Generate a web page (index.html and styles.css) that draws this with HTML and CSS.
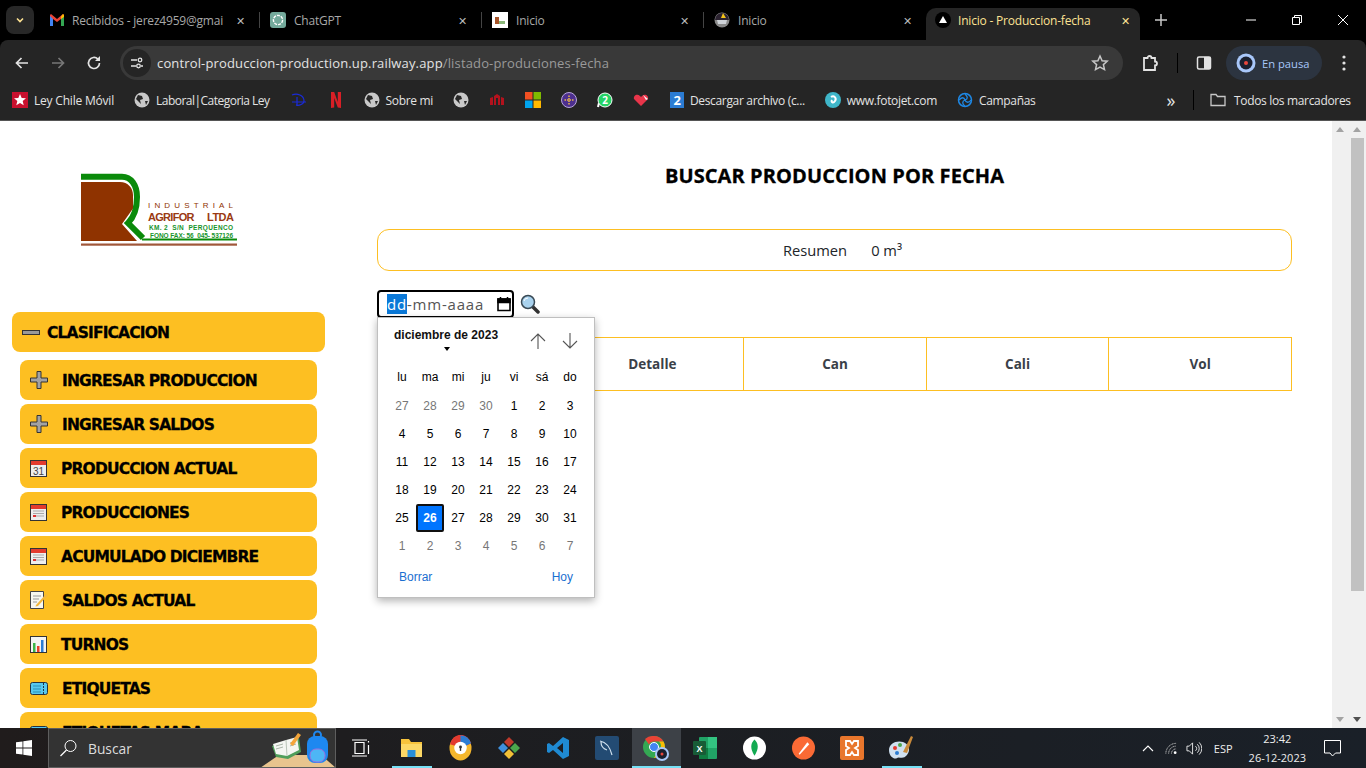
FILE: index.html
```html
<!DOCTYPE html>
<html lang="es">
<head>
<meta charset="utf-8">
<title>Inicio - Produccion-fecha</title>
<link rel="stylesheet" href="styles.css">
</head>
<body>
<div class="screen">
  <header class="tabstrip">
    <div class="tabmenu"><svg width="12" height="12" viewBox="0 0 12 12"><path d="M3 4.500l3 3 3-3" fill="none" stroke="#fde293" stroke-width="1.600"/></svg></div>
    <div class="tab t1">
      <svg class="fav" width="16" height="16" viewBox="0 0 16 16"><path d="M1 3v11h3V7l4 3 4-3v7h3V3l-1-1-6 5-6-5z" fill="#ea4335"/><path d="M1 4v10h3V7z" fill="#4285f4"/><path d="M15 4v10h-3V7z" fill="#34a853"/><path d="M12 4.500l2-2.500 1 1v2l-3 2z" fill="#fbbc04"/></svg>
      <span class="tabtext">Recibidos - jerez4959@gmai</span><span class="x">✕</span>
    </div><i class="sep"></i>
    <div class="tab t2">
      <svg class="fav" width="16" height="16" viewBox="0 0 16 16"><rect width="16" height="16" rx="3" fill="#74aa9c"/><circle cx="8" cy="8" r="4.600" fill="none" stroke="#fff" stroke-width="1.400" stroke-dasharray="3 1"/></svg>
      <span class="tabtext">ChatGPT</span><span class="x">✕</span>
    </div><i class="sep"></i>
    <div class="tab t2">
      <svg class="fav" width="16" height="16" viewBox="0 0 16 16"><rect width="16" height="16" fill="#fff"/><rect x="3" y="5" width="4" height="7" fill="#a8552a"/><rect x="7" y="9" width="6" height="3" fill="#8cb87a"/></svg>
      <span class="tabtext">Inicio</span><span class="x">✕</span>
    </div><i class="sep"></i>
    <div class="tab t3">
      <svg class="fav" width="16" height="16" viewBox="0 0 16 16"><circle cx="8" cy="8" r="7.500" fill="#8a8a8a"/><path d="M1 8a7 7 0 0 1 14 0z" fill="#2b2230"/><path d="M9 1l3 5H7z" fill="#f5c518"/><path d="M3 8h10l-1 4H4z" fill="#cfd3d8"/></svg>
      <span class="tabtext">Inicio</span><span class="x">✕</span>
    </div>
    <div class="tab active">
      <svg class="fav" width="16" height="16" viewBox="0 0 16 16"><circle cx="8" cy="8" r="8" fill="#000"/><path d="M8 4l4 7H4z" fill="#fff"/></svg>
      <span class="tabtext">Inicio - Produccion-fecha</span><span class="x">✕</span>
    </div>
    <div class="newtab"><svg width="14" height="14" viewBox="0 0 14 14"><path d="M7 1v12M1 7h12" stroke="#c7c7c7" stroke-width="1.500"/></svg></div>
    <div class="winctl">
      <svg width="12" height="12" viewBox="0 0 12 12"><path d="M1 6h10" stroke="#fff"/></svg>
      <svg width="12" height="12" viewBox="0 0 12 12"><path d="M1.500 3.500h7v7h-7zM3.500 3.500v-2h7v7h-2" fill="none" stroke="#fff"/></svg>
      <svg width="12" height="12" viewBox="0 0 12 12"><path d="M1 1l10 10M11 1L1 11" stroke="#fff"/></svg>
    </div>
  </header>

  <nav class="toolbar">
    <svg class="tb" width="16" height="16" viewBox="0 0 16 16"><path d="M14 8H2.500M7.500 3l-5 5 5 5" fill="none" stroke="#e3e3e3" stroke-width="1.700"/></svg>
    <svg class="tb" width="16" height="16" viewBox="0 0 16 16"><path d="M2 8h11.500M8.500 3l5 5-5 5" fill="none" stroke="#777" stroke-width="1.700"/></svg>
    <svg class="tb" width="16" height="16" viewBox="0 0 16 16"><path d="M13.500 8a5.500 5.500 0 1 1-1.600-3.900" fill="none" stroke="#e3e3e3" stroke-width="1.700"/><path d="M14 1v5H9z" fill="#e3e3e3"/></svg>
    <div class="omnibox">
      <span class="site"><svg width="14" height="14" viewBox="0 0 14 14"><path d="M1 4h6M11 10h2M1 10h5" stroke="#e3e3e3" stroke-width="1.300"/><circle cx="10" cy="4" r="1.800" fill="none" stroke="#e3e3e3" stroke-width="1.300"/><circle cx="8.500" cy="10" r="1.800" fill="none" stroke="#e3e3e3" stroke-width="1.300"/></svg></span>
      <span class="url">control-produccion-production.up.railway.app<span class="urlpath">/listado-produciones-fecha</span></span>
      <svg class="star" width="18" height="18" viewBox="0 0 18 18"><path d="M9 2l2.100 4.700 5.100.5-3.800 3.400 1.100 5L9 13l-4.500 2.600 1.100-5L1.800 7.200l5.100-.5z" fill="none" stroke="#c7c7c7" stroke-width="1.500"/></svg>
    </div>
    <svg class="ext" width="18" height="18" viewBox="0 0 18 18"><path d="M3 4h3.500a2 2 0 0 1 4 0H14v3.500a2 2 0 0 1 0 4V16H3z" fill="none" stroke="#e3e3e3" stroke-width="1.800"/></svg>
    <i class="tbsep"></i>
    <svg class="side" width="16" height="16" viewBox="0 0 16 16"><rect x="1.500" y="2" width="13" height="12" rx="1.500" fill="none" stroke="#e3e3e3" stroke-width="1.500"/><rect x="8" y="2" width="6.500" height="12" fill="#e3e3e3"/></svg>
    <div class="profile">
      <svg width="20" height="20" viewBox="0 0 20 20"><circle cx="10" cy="10" r="9.500" fill="#a8c7fa"/><circle cx="10" cy="10" r="6.500" fill="#1a2030"/><circle cx="10" cy="10" r="2" fill="#e8453c"/></svg>
      <span>En pausa</span>
    </div>
    <svg class="dots" width="4" height="16" viewBox="0 0 4 16"><circle cx="2" cy="2" r="1.600" fill="#e3e3e3"/><circle cx="2" cy="8" r="1.600" fill="#e3e3e3"/><circle cx="2" cy="14" r="1.600" fill="#e3e3e3"/></svg>
  </nav>

  <nav class="bookmarks">
    <a class="bm ley"><svg width="16" height="16" viewBox="0 0 16 16"><rect width="16" height="16" fill="#c8102e"/><path d="M8 2l1.700 4 4.300.3-3.300 2.800 1 4.200L8 11l-3.700 2.300 1-4.200L2 6.300 6.300 6z" fill="#fff"/></svg>Ley Chile Móvil</a>
    <a class="bm lab3"><svg width="16" height="16" viewBox="0 0 16 16"><circle cx="8" cy="8" r="7.500" fill="#c9c9c9"/><path d="M4 3l4 1 1 3-3 1 1 4-3-3-2-2zM11 9l3 0-2 4z" fill="#282828"/></svg>Laboral|Categoria Ley</a>
    <a class="bm dis"><svg width="16" height="16" viewBox="0 0 16 16"><path d="M1 3c5-2 12 0 12 6 0 3-5 5-8 4M6 5v9M1 10h14" fill="none" stroke="#1a2bd8" stroke-width="1.200"/></svg></a>
    <a class="bm nf"><svg width="12" height="16" viewBox="0 0 12 16"><path d="M1 0h3.200l3.600 10V0H11v16l-3.200-.5L4.200 6v9.500L1 16z" fill="#d81f26"/></svg></a>
    <a class="bm"><svg width="16" height="16" viewBox="0 0 16 16"><circle cx="8" cy="8" r="7.500" fill="#c9c9c9"/><path d="M4 3l4 1 1 3-3 1 1 4-3-3-2-2zM11 9l3 0-2 4z" fill="#282828"/></svg>Sobre mi</a>
    <a class="bm"><svg width="16" height="16" viewBox="0 0 16 16"><circle cx="8" cy="8" r="7.500" fill="#c9c9c9"/><path d="M4 3l4 1 1 3-3 1 1 4-3-3-2-2zM11 9l3 0-2 4z" fill="#282828"/></svg></a>
    <a class="bm"><svg width="16" height="16" viewBox="0 0 16 16"><path d="M1 6l3-1v8H1zM5 4l3-2 3 2v9H9V6H7v7H5zM12 5l3 1v7h-3z" fill="#b3121d"/></svg></a>
    <a class="bm"><svg width="16" height="16" viewBox="0 0 16 16"><rect width="7.500" height="7.500" fill="#f25022"/><rect x="8.500" width="7.500" height="7.500" fill="#7fba00"/><rect y="8.500" width="7.500" height="7.500" fill="#00a4ef"/><rect x="8.500" y="8.500" width="7.500" height="7.500" fill="#ffb900"/></svg></a>
    <a class="bm"><svg width="16" height="16" viewBox="0 0 16 16"><circle cx="8" cy="8" r="7.500" fill="#4d2f8e" stroke="#b9a6dc"/><path d="M3.500 8h9M8 3.500v9" stroke="#e8b84a" stroke-width="1.500" stroke-dasharray="1.500 1"/></svg></a>
    <a class="bm"><svg width="16" height="16" viewBox="0 0 16 16"><path d="M1 15l1-4" stroke="#fff" stroke-width="2"/><circle cx="8" cy="8" r="7" fill="#25d366" stroke="#fff"/><text class="wa" x="8" y="11.500">2</text></svg></a>
    <a class="bm hrt"><svg width="16" height="16" viewBox="0 0 16 16"><path d="M8 14L1 7c-1-3 3-6 6-3l1 1 1-1c3-3 7 0 6 3z" fill="#e8354a"/><path d="M10 3l5 4-2 1z" fill="#f2f2f2"/></svg></a>
    <a class="bm"><svg width="14" height="16" viewBox="0 0 14 16"><rect width="14" height="16" fill="#2b7cd3"/><text class="two" x="7" y="13">2</text></svg>Descargar archivo (c...</a>
    <a class="bm"><svg width="16" height="16" viewBox="0 0 16 16"><circle cx="8" cy="8" r="8" fill="#3fb6c9"/><path d="M6 5c3-2 6 1 4 4s-4 1-3-1" fill="none" stroke="#fff" stroke-width="2"/></svg>www.fotojet.com</a>
    <a class="bm"><svg width="16" height="16" viewBox="0 0 16 16"><circle cx="8" cy="8" r="6.500" fill="none" stroke="#1e88e5" stroke-width="1.500"/><path d="M8 2c3 3 3 5 0 6s-3 4 0 6M2 8c3-3 5-3 6 0s4 3 6 0" fill="none" stroke="#1e88e5" stroke-width="1.300"/></svg>Campañas</a>
    <span class="more">»</span>
    <i class="bmsep"></i>
    <a class="bm last"><svg width="16" height="14" viewBox="0 0 16 14"><path d="M1 12.500V1.500h5l1.500 2h7.500v9z" fill="none" stroke="#c7c7c7" stroke-width="1.300"/></svg>Todos los marcadores</a>
  </nav>

  <main class="viewport">
    <div class="page">
      <aside class="sidebar">
        <div class="logo">
          <svg width="158" height="75" viewBox="0 0 158 75">
            <path d="M1 3.700H42C51 3.700 57 12 57 24C57 36 54 44 48 50L63 65" fill="none" stroke="#0a8a0a" stroke-width="6"/>
            <path d="M62 66.500H157" stroke="#0a8a0a" stroke-width="2"/>
            <path d="M1 9H40C48 9 53 15 53 22V35.500L42 51L57 68H1z" fill="#8f3300"/>
            <rect x="1" y="70.500" width="156" height="2.200" fill="#a0573a"/>
            <text class="lg1" x="68" y="35" textLength="85">INDUSTRIAL</text>
            <text class="lg2" x="68" y="48" textLength="46.500">AGRIFOR</text>
            <text class="lg2" x="127" y="48" textLength="27">LTDA</text>
            <text class="lg3" x="69" y="57" textLength="84">KM. 2  S/N  PERQUENCO</text>
            <text class="lg3" x="70" y="65" textLength="83">FONO FAX: 56  045- 537126</text>
          </svg>
        </div>
        <div class="menuhead"><span class="minus"></span>CLASIFICACION</div>
        <ul class="menu">
          <li class="item"><span class="ic"><svg width="18" height="18" viewBox="0 0 18 18"><path class="plus" d="M7 .5h4v6.500h6.500v4H11v6.500H7V11H.5V7H7z"/></svg></span><span class="lab2">INGRESAR PRODUCCION</span></li>
          <li class="item"><span class="ic"><svg width="18" height="18" viewBox="0 0 18 18"><path class="plus" d="M7 .5h4v6.500h6.500v4H11v6.500H7V11H.5V7H7z"/></svg></span><span class="lab2">INGRESAR SALDOS</span></li>
          <li class="item"><span class="ic"><svg width="17" height="17" viewBox="0 0 17 17"><rect x=".5" y=".5" width="16" height="16" fill="#eee" stroke="#333"/><rect x="1" y="1" width="15" height="4" fill="#e33b2e"/><text class="cal31" x="8.500" y="14.500">31</text></svg></span><span>PRODUCCION ACTUAL</span></li>
          <li class="item"><span class="ic"><svg width="17" height="17" viewBox="0 0 17 17"><rect x=".5" y=".5" width="16" height="16" fill="#eee" stroke="#333"/><rect x="1" y="1" width="15" height="4" fill="#e33b2e"/><path d="M3 7h11M3 9.500h11M3 12h11" stroke="#aaa"/><rect x="3" y="11" width="3" height="2" fill="#d33"/></svg></span><span>PRODUCCIONES</span></li>
          <li class="item"><span class="ic"><svg width="17" height="17" viewBox="0 0 17 17"><rect x=".5" y=".5" width="16" height="16" fill="#eee" stroke="#333"/><rect x="1" y="1" width="15" height="4" fill="#e33b2e"/><path d="M3 7h11M3 9.500h11M3 12h11" stroke="#aaa"/><rect x="3" y="11" width="3" height="2" fill="#d33"/></svg></span><span>ACUMULADO DICIEMBRE</span></li>
          <li class="item"><span class="ic"><svg width="18" height="18" viewBox="0 0 18 18"><path d="M.5.500h13v17H.5z" fill="#f7f7f0" stroke="#444"/><path d="M3 5h8M3 8h6M3 11h4" stroke="#999"/><path d="M6 14l10-11 1.500 1.500L8 15l-2.500.5z" fill="#f3b73c"/></svg></span><span class="lab2">SALDOS ACTUAL</span></li>
          <li class="item"><span class="ic"><svg width="17" height="17" viewBox="0 0 17 17"><rect x=".5" y=".5" width="16" height="16" fill="#f4f4f4" stroke="#333"/><rect x="3" y="7" width="2.500" height="9" fill="#3bb54a"/><rect x="7" y="10" width="2.500" height="6" fill="#e8402c"/><rect x="11" y="4" width="2.500" height="12" fill="#2b7cd3"/></svg></span><span>TURNOS</span></li>
          <li class="item"><span class="ic"><svg width="18" height="13" viewBox="0 0 18 13"><rect x=".5" y=".5" width="17" height="12" rx="2" fill="#56c8ee" stroke="#234"/><path d="M3 4h8M3 7h8M3 10h8" stroke="#2a8fb5"/><path d="M13.500 1v11" stroke="#234" stroke-dasharray="2 1"/></svg></span><span class="lab2">ETIQUETAS</span></li>
          <li class="item"><span class="ic"><svg width="18" height="13" viewBox="0 0 18 13"><rect x=".5" y=".5" width="17" height="12" rx="2" fill="#56c8ee" stroke="#234"/></svg></span><span class="lab2">ETIQUETAS MARA</span></li>
        </ul>
      </aside>
      <section class="content">
        <h1 class="title">BUSCAR PRODUCCION POR FECHA</h1>
        <div class="resumen"><span>Resumen</span><span>0 m³</span></div>
        <div class="search">
          <div class="dateinput"><span class="dd">dd</span><span>-mm-aaaa</span>
            <svg width="16" height="16" viewBox="0 0 16 16"><path d="M2 3h12v11.500H2z" fill="none" stroke="#000" stroke-width="1.600"/><path d="M2 3h12v3.500H2zM4.500 1v2M11.500 1v2" fill="#000" stroke="#000" stroke-width="1.500"/></svg>
          </div>
          <svg width="20" height="20" viewBox="0 0 20 20"><path d="M12 12l6 6" stroke="#333" stroke-width="3.500" stroke-linecap="round"/><circle cx="8" cy="8" r="6.500" fill="#a9d2ee" stroke="#3a4a55" stroke-width="1.500"/><path d="M4 7a4 4 0 0 1 4-3" stroke="#fff" fill="none"/></svg>
        </div>
        <div class="tablewrap">
          <div class="tcell"></div>
          <div class="tcell">Detalle</div>
          <div class="tcell">Can</div>
          <div class="tcell">Cali</div>
          <div class="tcell">Vol</div>
        </div>
        <div class="picker">
          <div class="phead">
            <div class="month">diciembre de 2023<span class="caret"></span></div>
            <svg width="16" height="18" viewBox="0 0 16 18"><path d="M8 17V2M1 9l7-7 7 7" fill="none" stroke="#555" stroke-width="1.100"/></svg>
            <svg class="down" width="16" height="18" viewBox="0 0 16 18"><path d="M8 1v15M1 9l7 7 7-7" fill="none" stroke="#555" stroke-width="1.100"/></svg>
          </div>
          <div class="grid">
            <b>lu</b><b>ma</b><b>mi</b><b>ju</b><b>vi</b><b>sá</b><b>do</b>
            <i class="off">27</i><i class="off">28</i><i class="off">29</i><i class="off">30</i><i>1</i><i>2</i><i>3</i>
            <i>4</i><i>5</i><i>6</i><i>7</i><i>8</i><i>9</i><i>10</i>
            <i>11</i><i>12</i><i>13</i><i>14</i><i>15</i><i>16</i><i>17</i>
            <i>18</i><i>19</i><i>20</i><i>21</i><i>22</i><i>23</i><i>24</i>
            <i>25</i><i class="today">26</i><i>27</i><i>28</i><i>29</i><i>30</i><i>31</i>
            <i class="off">1</i><i class="off">2</i><i class="off">3</i><i class="off">4</i><i class="off">5</i><i class="off">6</i><i class="off">7</i>
          </div>
          <div class="pfoot"><span>Borrar</span><span>Hoy</span></div>
        </div>
      </section>
    </div>
    <div class="scrollbar">
      <span class="arrow up"></span>
      <span class="arrow dn"></span>
    </div>
    <div class="scrollbar">
      <span class="arrow up"></span>
      <span class="thumb"></span>
      <span class="arrow dn dark"></span>
    </div>
  </main>

  <footer class="taskbar">
    <div class="start"><svg width="16" height="16" viewBox="0 0 16 16"><path d="M0 2.300l6.500-.9v6.200H0zM7.300 1.300L16 0v7.600H7.300zM0 8.400h6.500v6.200L0 13.700zM7.300 8.400H16V16l-8.700-1.200z" fill="#fff"/></svg></div>
    <div class="searchbox">
      <svg width="17" height="18" viewBox="0 0 17 18"><circle cx="10.500" cy="7" r="5.500" fill="none" stroke="#fff"/><path d="M6.500 11l-6 6" stroke="#fff" stroke-width="1.200"/></svg>
      <span>Buscar</span>
      <svg class="deco" width="76" height="40" viewBox="0 0 76 40"><path d="M0 40l19-13h42l15 13z" fill="#e8c48e"/><path d="M12 18l14-5 13-3 2 14-13 7-12-2z" fill="#4f9e5a"/><path d="M13 16l13-4 11-3 2 13-12 6-11-2z" fill="#f4f6f2"/><path d="M26 12l1 16" stroke="#b9c4b9"/><path d="M16 18l7-2M16 21l7-2M30 15l6-2M30 18l6-2" stroke="#a8b4a8"/><path d="M30 16l8-11 3 2-8 11z" fill="#f4a53a"/><rect x="47" y="8" width="21" height="27" rx="8" fill="#1e88f0"/><circle cx="57.500" cy="7" r="3.500" fill="none" stroke="#1e88f0" stroke-width="2"/><rect x="50" y="21" width="15" height="13" rx="6" fill="#4db6f5" stroke="#9a6fe0"/></svg>
    </div>
    <div class="tasks">
      <span class="task first"><svg width="18" height="18" viewBox="0 0 18 18"><path d="M3 3.500h9v11H3zM0 1h15M0 17h15M16.500 2v1.500M16.500 6v9" stroke="#fff" fill="none" stroke-width="1.200"/></svg></span>
      <span class="task open"><svg width="23" height="20" viewBox="0 0 23 20"><path d="M1 1h8l2 3h11v15H1z" fill="#f7c33c"/><rect x="1" y="6" width="21" height="13" fill="#fcd866"/><rect x="7.500" y="12" width="8" height="7" fill="#2a8fd8"/></svg></span>
      <span class="task"><svg width="23" height="26" viewBox="0 0 24 26"><ellipse cx="12" cy="13" rx="11.500" ry="13" fill="#f5b72c"/><path d="M1 9a11.500 13 0 0 1 22-1l-6 3a5.500 5.500 0 0 0-10 0z" fill="#e23a30"/><path d="M12 0a11.500 13 0 0 1 11 8l-6 3-5-4z" fill="#2b7cd3"/><circle cx="12" cy="13" r="6.500" fill="#fff"/><circle cx="12" cy="12" r="1.500" fill="#333"/><rect x="11.300" y="12" width="1.400" height="4" fill="#333"/></svg></span>
      <span class="task"><svg width="24" height="24" viewBox="0 0 24 24"><path d="M12 1l5 5-5 5-5-5z" fill="#c0392b"/><path d="M6 7l5 5-5 5-5-5z" fill="#3f8fdc"/><path d="M18 7l5 5-5 5-5-5z" fill="#4ca64c"/><path d="M12 13l5 5-5 5-5-5z" fill="#f2c037"/></svg></span>
      <span class="task"><svg width="24" height="24" viewBox="0 0 24 24"><path d="M17 1l6 3v16l-6 3L7 14l-4 3-2-1V8l2-1 4 3zM17 7l-6 5 6 5z" fill="#1f8ad2"/></svg></span>
      <span class="task"><svg width="24" height="24" viewBox="0 0 24 24"><rect width="24" height="24" rx="2" fill="#234b73"/><path d="M5 5c6 1 10 6 12 14M6 6c0 4 3 7 6 8" fill="none" stroke="#cfe0ee" stroke-width="1.200"/></svg></span>
      <span class="task active open"><svg width="28" height="27" viewBox="0 0 28 27"><circle cx="12" cy="12" r="11" fill="#34a853"/><path d="M12 1a11 11 0 0 1 9.500 5.500H12a5.500 5.500 0 0 0-5 3L3 4a11 11 0 0 1 9-3z" fill="#ea4335"/><path d="M21.500 6.500A11 11 0 0 1 12 23l5-8a5.500 5.500 0 0 0 0-8.500z" fill="#fbbc04"/><circle cx="12" cy="12" r="4.500" fill="#4285f4" stroke="#fff"/><circle cx="20" cy="19" r="7" fill="#a8c7fa"/><circle cx="20" cy="19" r="5" fill="#1a2030"/><circle cx="20" cy="19" r="1.500" fill="#e8453c"/></svg></span>
      <span class="task"><svg width="24" height="24" viewBox="0 0 24 24"><rect x="6" y="1" width="18" height="22" rx="1" fill="#21a366"/><rect x="15" y="1" width="9" height="11" fill="#33c481"/><rect x="6" y="12" width="9" height="11" fill="#107c41"/><rect y="5" width="13" height="14" rx="1" fill="#185c37"/><text class="xl" x="6.500" y="16">X</text></svg></span>
      <span class="task"><svg width="23" height="24" viewBox="0 0 24 24"><circle cx="12" cy="12" r="12" fill="#fff"/><path d="M12 3c4 4 5 9 0 17-5-8-4-13 0-17z" fill="#13aa52"/></svg></span>
      <span class="task"><svg width="23" height="24" viewBox="0 0 24 24"><circle cx="12" cy="12" r="12" fill="#fa6a35"/><path d="M7 18l9-12 2 2-10 11z" fill="#fff"/></svg></span>
      <span class="task"><svg width="24" height="24" viewBox="0 0 24 24"><rect width="24" height="24" rx="2" fill="#e8762c"/><path d="M6 5h4l2 3 2-3h4v5l-3 2 3 2v5h-4l-2-3-2 3H6v-5l3-2-3-2z" fill="none" stroke="#fff" stroke-width="1.800"/></svg></span>
      <span class="task open"><svg width="26" height="26" viewBox="0 0 26 26"><path d="M1 15c0-7 8-10 14-8s8 8 4 13-8 1-10 3-8-1-8-8z" fill="#cfe0f0"/><circle cx="7" cy="13" r="2" fill="#e23a30"/><circle cx="12" cy="10" r="2" fill="#4ca64c"/><circle cx="9" cy="18" r="2" fill="#2b7cd3"/><path d="M15 17L23 1l2 1-6 16z" fill="#c98a3a"/></svg></span>
    </div>
    <div class="tray">
      <svg width="12" height="8" viewBox="0 0 12 8"><path d="M1 7l5-5 5 5" fill="none" stroke="#fff" stroke-width="1.100"/></svg>
      <svg class="wifi" width="13" height="14" viewBox="0 0 14 14"><path d="M2 13a11 11 0 0 1 11-11M5 13a8 8 0 0 1 8-8M8 13a5 5 0 0 1 5-5" fill="none" stroke="#ccc" stroke-dasharray="1.200 .6"/><circle cx="12" cy="12" r="1.500" fill="#fff"/></svg>
      <svg class="vol" width="16" height="15" viewBox="0 0 17 15"><path d="M1 5h2.500L7 1.500v12L3.500 10H1zM10 5a3 3 0 0 1 0 5M12 3a6 6 0 0 1 0 9M14 1a9 9 0 0 1 0 13" fill="none" stroke="#fff" stroke-width=".9"/></svg>
      <span class="lang">ESP</span>
      <div class="clock"><span>23:42</span><span>26-12-2023</span></div>
      <svg class="notif" width="17" height="17" viewBox="0 0 17 17"><path d="M.5.500h16v12.500h-5L8.500 16 6 13H.5z" fill="none" stroke="#fff"/></svg>
    </div>
  </footer>
</div>
</body>
</html>
```
FILE: styles.css
```css
* { box-sizing: border-box; }
html, body { margin: 0; height: 100%; overflow: hidden; }
body { font-family: "Open Sans", "Noto Sans", sans-serif; }
.screen { width: 1366px; height: 768px; display: flex; flex-direction: column; overflow: hidden; background: #000; }

.tabstrip { height: 40px; background: #000; display: flex; align-items: flex-end; padding-left: 6px; flex: none; }
.tabmenu { width: 28px; height: 28px; margin: 0 7px 6px 0; border-radius: 8px; background: #282828; display: flex; align-items: center; justify-content: center; flex: none; }
.tab { height: 32px; padding-bottom: 8px; display: flex; align-items: center; color: #a8a8a8; font-size: 12px; letter-spacing: -.2px; flex: none; }
.tab .fav { flex: none; margin-right: 8px; }
.tabtext { flex: 1; white-space: nowrap; overflow: hidden; }
.x { font-size: 11px; color: #bbb; width: 16px; text-align: center; flex: none; }
.t1 { width: 218px; padding-left: 8px; padding-right: 11px; }
.t1 .fav { margin-right: 7px; }
.t2 { width: 221px; padding-left: 10px; padding-right: 11px; }
.t3 { width: 222px; padding-left: 10px; padding-right: 11px; }
.sep { width: 1px; height: 16px; background: #444; margin: 0 0 12px; flex: none; }
.tab.active { width: 214px; background: #252525; border-radius: 10px 10px 0 0; color: #fde293; padding-left: 9px; padding-right: 7px; }
.tab.active .x { color: #fde293; }
.tab.active .fav { margin-right: 7px; }
.newtab { width: 30px; height: 32px; padding-bottom: 8px; display: flex; align-items: center; justify-content: center; margin-left: 6px; flex: none; }
.winctl { margin-left: auto; height: 40px; width: 138px; display: flex; align-items: center; justify-content: space-between; padding: 0 17px; align-self: flex-start; flex: none; }

.toolbar { height: 46px; background: #252525; border-radius: 8px 8px 0 0; display: flex; align-items: center; flex: none; padding: 6px 0 6px 14px; }
.tb { margin-right: 20px; flex: none; }
.tb:nth-of-type(3) { margin-right: 18px; }
.omnibox { width: 1003px; height: 34px; background: #393939; border-radius: 17px; display: flex; align-items: center; padding: 0 14px 0 3px; flex: none; }
.site { width: 28px; height: 28px; border-radius: 50%; background: #252525; display: flex; align-items: center; justify-content: center; margin-right: 6px; flex: none; }
.url { color: #e3e3e3; font-size: 13px; letter-spacing: .15px; white-space: nowrap; flex: 1; }
.urlpath { color: #9a9a9a; }
.ext { margin-left: 18px; flex: none; }
.tbsep { width: 1px; height: 20px; background: #000; margin-left: 18px; flex: none; }
.side { margin-left: 18px; flex: none; }
.profile { margin-left: 14px; width: 96px; height: 34px; border-radius: 17px; background: #2c3440; color: #a8c7fa; font-size: 11.200px; display: flex; align-items: center; gap: 6px; padding-left: 10px; flex: none; }
.dots { margin-left: 20px; flex: none; }

.bookmarks { height: 35px; background: #252525; border-bottom: 1px solid #555; display: flex; align-items: center; padding: 0 0 6px 12px; color: #e3e3e3; font-size: 12px; letter-spacing: -.33px; flex: none; white-space: nowrap; }
.bm { display: flex; align-items: center; gap: 6px; margin-right: 20px; flex: none; }
.ley { letter-spacing: -.2px; }
.lab3 { letter-spacing: -.52px; margin-right: 21px; }
.dis { margin-right: 23px; }
.nf { margin-right: 22px; }
.hrt { margin-right: 21px; }
.wa { font: 700 10px "Open Sans", sans-serif; fill: #fff; text-anchor: middle; }
.two { font: 700 13px "Open Sans", sans-serif; fill: #fff; text-anchor: middle; }
.more { font-size: 18px; margin-left: 111px; line-height: 1; flex: none; }
.bmsep { width: 1px; height: 20px; background: #000; margin-left: 18px; flex: none; }
.bm.last { margin: 0 0 0 16px; gap: 8px; }

.viewport { flex: 1; min-height: 0; position: relative; display: flex; overflow: hidden; background: #fff; }
.page { flex: 1; display: flex; min-width: 0; overflow: hidden; position: relative; }
.scrollbar { width: 17px; background: #f0f0f0; flex: none; position: relative; }
.thumb { width: 13px; height: 453px; background: #c1c1c1; position: absolute; top: 17px; left: 2px; }
.arrow { position: absolute; left: 4px; width: 0; height: 0; border-left: 4px solid transparent; border-right: 4px solid transparent; }
.arrow.up { top: 6px; border-bottom: 5px solid #a3a3a3; }
.arrow.dn { bottom: 6px; border-top: 5px solid #a3a3a3; }
.arrow.dn.dark { border-top-color: #505050; }

.sidebar { width: 337px; flex: none; padding: 0 12px; }
.logo { height: 191px; padding: 52px 0 0 68px; }
.logo svg { display: block; }
.logo text { font-family: "Liberation Sans", sans-serif; }
.lg1 { font-size: 8px; fill: #8f3300; }
.lg2 { font-size: 11px; font-weight: 700; fill: #9a3a12; }
.lg3 { font-size: 6.500px; font-weight: 700; fill: #17942c; white-space: pre; }

.menuhead { height: 40px; width: 313px; background: #fdbf22; border-radius: 8px; display: flex; align-items: center; padding: 2px 0 0 10px; font: 700 15.500px "DejaVu Sans", Verdana, sans-serif; color: #000; letter-spacing: -.85px; -webkit-text-stroke: .3px #000; }
.minus { width: 18px; height: 5px; background: #999; border: 1px solid #333; margin: -2px 7px 0 0; flex: none; }
.menu { list-style: none; margin: 8px 0 0 8px; padding: 0; display: flex; flex-direction: column; gap: 4px; width: 297px; }
.item { height: 40px; flex: none; background: #fdbf22; border-radius: 8px; display: flex; align-items: center; padding: 2px 0 0 10px; font: 700 15.500px "DejaVu Sans", Verdana, sans-serif; color: #000; letter-spacing: -.85px; -webkit-text-stroke: .3px #000; white-space: nowrap; }
.ic { width: 31px; height: 18px; margin-top: -2px; display: flex; align-items: center; flex: none; }
.lab2 { margin-left: 1px; }
.plus { fill: #a2a2a2; stroke: #333; stroke-width: 1; }
.cal31 { font: 10px "Liberation Sans", sans-serif; fill: #444; text-anchor: middle; -webkit-text-stroke: 0; letter-spacing: 0; }

.content { position: relative; flex: 1; min-width: 0; padding: 40px 0 0 40px; }
.title { margin: 0; height: 28px; font: 700 20px/30px "Open Sans", sans-serif; color: #000; text-align: center; width: 915px; letter-spacing: .1px; -webkit-text-stroke: .3px #000; }
.resumen { width: 915px; height: 42px; margin-top: 40px; border: 1px solid #fdbf22; border-radius: 12px; display: flex; align-items: center; justify-content: center; gap: 24px; font-size: 14.700px; color: #212529; padding-left: 16px; }
.search { display: flex; align-items: center; gap: 6px; margin-top: 19px; height: 28px; }
.dateinput { width: 137px; height: 28px; border: 2px solid #000; border-radius: 4px; display: flex; align-items: center; padding-left: 8px; font-size: 15px; color: #555; letter-spacing: .8px; }
.dateinput svg { margin-left: auto; }
.dd { background: #0a78d7; color: #fff; }
.tablewrap { width: 915px; height: 54px; margin-top: 19px; border: 1px solid #fdbf22; display: grid; grid-template-columns: repeat(5, 1fr); }
.tcell { display: flex; align-items: center; justify-content: center; font-size: 13.500px; font-weight: 700; color: #3a3f48; border-left: 1px solid #fdbf22; }
.tcell:first-child { border-left: 0; }

.picker { position: absolute; left: 40px; top: 196px; width: 218px; height: 281px; background: #fff; border: 1px solid #bfbfbf; box-shadow: 0 3px 8px rgba(0,0,0,.3); font-family: "Liberation Sans", Arial, sans-serif; color: #000; padding: 0 0 0 10px; z-index: 2; }
.phead { height: 45px; display: flex; align-items: flex-start; padding-top: 14px; }
.month { width: 136px; margin: 1px 0 0 6px; font-size: 12px; font-weight: 700; color: #111; position: relative; height: 26px; line-height: 5px; }
.caret { position: absolute; left: 50px; top: 14px; border-left: 3.500px solid transparent; border-right: 3.500px solid transparent; border-top: 4px solid #000; }
.down { margin-left: 16px; }
.grid { display: grid; grid-template-columns: repeat(7, 28px); grid-template-rows: 29px; grid-auto-rows: 28px; font-size: 12px; text-align: center; }
.grid b, .grid i { font-weight: 400; font-style: normal; display: flex; align-items: center; justify-content: center; }
.grid b { padding-bottom: 1px; }
.grid .off { color: #777; }
.grid .today { background: #0075ff; color: #fff; font-weight: 700; border: 2px solid #101010; border-radius: 2px; }
.pfoot { display: flex; justify-content: space-between; font-size: 12px; color: #1a6fd0; padding: 10px 21px 0 11px; }

.taskbar { height: 40px; flex: none; background: linear-gradient(90deg, #201c1c 0%, #1c1e22 50%, #1a2028 100%); display: flex; align-items: stretch; color: #fff; }
.start { width: 48px; display: flex; align-items: center; justify-content: center; flex: none; }
.searchbox { width: 288px; background: #333; border: 1px solid #5e5e5e; display: flex; align-items: center; padding-left: 11px; gap: 11px; font-size: 13.800px; color: #ddd; position: relative; overflow: hidden; flex: none; }
.deco { position: absolute; right: -1px; top: -1px; }
.tasks { display: flex; flex: none; }
.task { width: 49px; display: flex; align-items: center; justify-content: center; position: relative; flex: none; }
.task.first { margin-right: 1.500px; }
.task.open::after { content: ""; position: absolute; left: 5px; right: 4px; bottom: 0; height: 2px; background: #76e0f5; }
.task.active { background: #3d4147; }
.task.active::after { left: 0; right: 0; }
.xl { font: 700 9px "Liberation Sans", sans-serif; fill: #fff; text-anchor: middle; }
.tray { margin-left: auto; display: flex; align-items: center; font-size: 11px; padding-right: 25px; color: #eee; flex: none; }
.wifi { margin-left: 10px; }
.vol { margin-left: 9px; }
.lang { margin-left: 12px; font-size: 11px; }
.clock { display: flex; flex-direction: column; align-items: center; line-height: 19px; margin-left: 16px; }
.notif { margin-left: 18px; }
```
